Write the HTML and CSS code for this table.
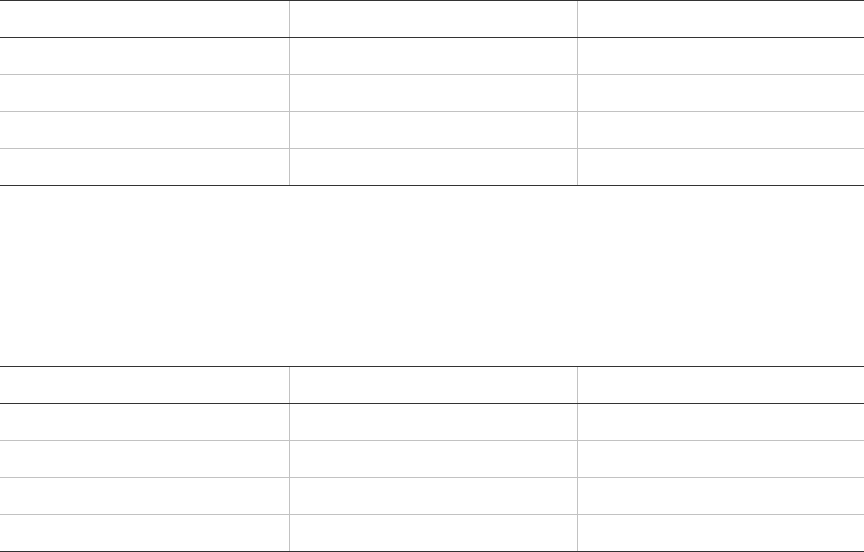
FILE: index.html
```html
<!DOCTYPE html>
<html>
<head>
<meta charset="utf-8">
<link rel="stylesheet" href="styles.css">
</head>
<body>
<div class="page">
  <div class="table">
    <div class="row head"><div class="cell"></div><div class="cell"></div><div class="cell"></div></div>
    <div class="row"><div class="cell"></div><div class="cell"></div><div class="cell"></div></div>
    <div class="row"><div class="cell"></div><div class="cell"></div><div class="cell"></div></div>
    <div class="row"><div class="cell"></div><div class="cell"></div><div class="cell"></div></div>
    <div class="row last"><div class="cell"></div><div class="cell"></div><div class="cell"></div></div>
  </div>
  <div class="table">
    <div class="row head"><div class="cell"></div><div class="cell"></div><div class="cell"></div></div>
    <div class="row"><div class="cell"></div><div class="cell"></div><div class="cell"></div></div>
    <div class="row"><div class="cell"></div><div class="cell"></div><div class="cell"></div></div>
    <div class="row"><div class="cell"></div><div class="cell"></div><div class="cell"></div></div>
    <div class="row last"><div class="cell"></div><div class="cell"></div><div class="cell"></div></div>
  </div>
</div>
</body>
</html>
```
FILE: styles.css
```css
* { box-sizing: border-box; }
html, body { margin: 0; padding: 0; background: #fff; }
body { font-family: "Liberation Sans", Arial, sans-serif; }
.page {
  width: 864px;
  height: 552px;
  display: flex;
  flex-direction: column;
  gap: 180px;
}
.table {
  border-top: 1px solid #333;
}
.row {
  display: grid;
  grid-template-columns: 289px 288px 287px;
  height: 37px;
  border-bottom: 1px solid #c2c2c2;
}
.row.head, .row.last { border-bottom-color: #333; }
.cell + .cell { border-left: 1px solid #c2c2c2; }
```
